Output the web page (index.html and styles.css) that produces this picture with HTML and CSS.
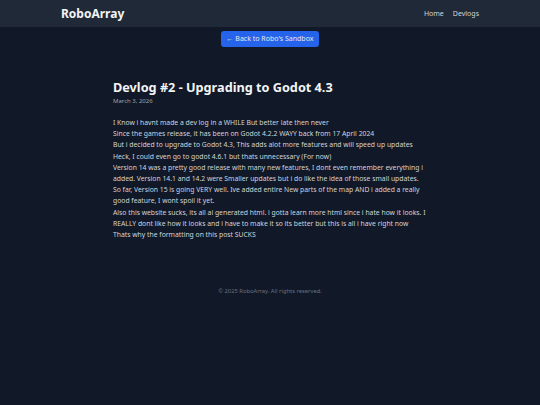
FILE: index.html
```html
<!DOCTYPE html>
<html>
<head>
    <title>Devlog #2 - Upgrading to Godot 4.3 | RoboArray</title>
    <link rel="stylesheet" href="styles.css">
</head>
<body>
    <header class="site-header">
        <div class="header-inner">
            <a class="logo" href="#">RoboArray</a>
            <nav class="nav">
                <a href="#">Home</a>
                <a href="#">Devlogs</a>
            </nav>
        </div>
    </header>

    <div class="back-row">
        <a class="back-btn" href="#">&larr; Back to Robo's Sandbox</a>
    </div>

    <main class="post">
        <h1 class="post-title">Devlog #2 - Upgrading to Godot 4.3</h1>
        <p class="post-date">March 3, 2026</p>

        <div class="post-body">
            I Know i havnt made a dev log in a WHILE But better late then never<br>
            Since the games release, it has been on Godot 4.2.2 WAYY back from 17 April 2024<br>
            But i decided to upgrade to Godot 4.3, This adds alot more features and will speed up updates<br>
            Heck, I could even go to godot 4.6.1 but thats unnecessary (For now)<br>
            Version 14 was a pretty good release with many new features, I dont even remember everything i added. Version 14.1 and 14.2 were Smaller updates but i do like the idea of those small updates.<br>
            So far, Version 15 is going VERY well. Ive added entire New parts of the map AND i added a really good feature, I wont spoil it yet.<br>
            Also this website sucks, its all ai generated html. i gotta learn more html since i hate how it looks. I REALLY dont like how it looks and i have to make it so its better but this is all i have right now<br>
            Thats why the formatting on this post SUCKS
        </div>
    </main>

    <footer class="site-footer">
        &copy; 2025 RoboArray. All rights reserved.
    </footer>
</body>
</html>
```

FILE: styles.css
```css
body, html {
    margin: 0;
    padding: 0;
    font-family: "Noto Sans", "Open Sans", sans-serif;
    background-color: #111827;
    color: #d1d5db;
    min-height: 100%;
}

a {
    text-decoration: none;
}

.site-header {
    background-color: #1f2937;
    height: 27px;
}

.header-inner {
    width: 418px;
    margin: 0 auto;
    height: 100%;
    display: flex;
    align-items: center;
    justify-content: space-between;
}

.logo {
    color: #f3f4f6;
    font-weight: bold;
    font-size: 12px;
}

.nav {
    display: flex;
    gap: 9px;
}

.nav a {
    color: #d1d5db;
    font-size: 7px;
}

.back-row {
    display: flex;
    justify-content: center;
    padding-top: 4px;
}

.back-btn {
    display: block;
    background-color: #2563eb;
    color: #e5e7eb;
    font-size: 7px;
    line-height: 16px;
    padding: 0 6px;
    border-radius: 3px;
}

.post {
    width: 314px;
    margin: 0 auto;
    padding-top: 32px;
}

.post-title {
    color: #f3f4f6;
    font-size: 12.7px;
    line-height: 16px;
    margin: 0;
}

.post-date {
    color: #9ca3af;
    font-size: 6px;
    line-height: 8px;
    margin: 2px 0 0;
}

.post-body {
    margin-top: 12px;
    font-size: 6.8px;
    line-height: 11.2px;
}

.site-footer {
    text-align: center;
    color: #6b7280;
    font-size: 5.8px;
    padding-top: 47px;
}
```
